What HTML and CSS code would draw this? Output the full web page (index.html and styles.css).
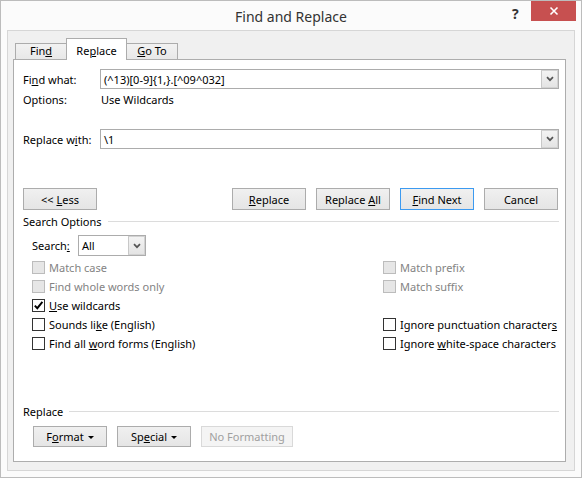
FILE: index.html
```html
<!DOCTYPE html>
<html>
<head>
<meta charset="utf-8">
<title>Find and Replace</title>
<link rel="stylesheet" href="styles.css">
</head>
<body>
<div class="window">
  <div class="titlebar">
    <div class="title">Find and Replace</div>
    <div class="help">?</div>
    <div class="close"><svg width="10" height="10" viewBox="0 0 10 10"><path d="M1.5 1.5 L8.5 8.5 M8.5 1.5 L1.5 8.5" stroke="#fff" stroke-width="1.6" fill="none"/></svg></div>
  </div>
  <div class="frame">
    <div class="tabs">
      <div class="tab tab-first"><span>Fin<u>d</u></span></div>
      <div class="tab active"><span>Re<u>p</u>lace</span></div>
      <div class="tab tab-last"><span><u>G</u>o To</span></div>
    </div>
    <div class="panel">
      <div class="field-row find-row">
        <span class="lbl">Fi<u>n</u>d what:</span>
        <div class="combo">
          <span class="combo-text">(^13)[0-9]{1,}.[^09^032]</span>
          <span class="drop"><svg width="8" height="6" viewBox="0 0 8 6"><path d="M1 1.2 L4 4.2 L7 1.2" stroke="#555" stroke-width="1.7" fill="none"/></svg></span>
        </div>
      </div>
      <div class="field-row options-row">
        <span class="lbl">Options:</span>
        <span class="opt-val">Use Wildcards</span>
      </div>
      <div class="field-row replace-row">
        <span class="lbl">Replace w<u>i</u>th:</span>
        <div class="combo">
          <span class="combo-text">\1</span>
          <span class="drop"><svg width="8" height="6" viewBox="0 0 8 6"><path d="M1 1.2 L4 4.2 L7 1.2" stroke="#555" stroke-width="1.7" fill="none"/></svg></span>
        </div>
      </div>
      <div class="btn-row">
        <button class="btn"><span>&lt;&lt; <u>L</u>ess</span></button>
        <div class="spacer"></div>
        <button class="btn"><span><u>R</u>eplace</span></button>
        <button class="btn"><span>Replace <u>A</u>ll</span></button>
        <button class="btn default"><span><u>F</u>ind Next</span></button>
        <button class="btn"><span>Cancel</span></button>
      </div>
      <div class="section"><span>Search Options</span><span class="rule"></span></div>
      <div class="search-row">
        <span class="search-lbl">Search<u>:</u></span>
        <div class="select">
          <span class="select-text">All</span>
          <span class="drop"><svg width="8" height="6" viewBox="0 0 8 6"><path d="M1 1.2 L4 4.2 L7 1.2" stroke="#555" stroke-width="1.7" fill="none"/></svg></span>
        </div>
      </div>
      <div class="checks">
        <div class="chk disabled"><span class="box"></span><span>Match case</span></div>
        <div class="chk disabled"><span class="box"></span><span>Match prefix</span></div>
        <div class="chk disabled"><span class="box"></span><span>Find whole words only</span></div>
        <div class="chk disabled"><span class="box"></span><span>Match suffix</span></div>
        <div class="chk"><span class="box"><svg width="11" height="11" viewBox="0 0 11 11"><path d="M1.8 5.6 L4.3 8.2 L9.4 1.8" stroke="#000" stroke-width="1.9" fill="none"/></svg></span><span><u>U</u>se wildcards</span></div>
        <div class="chk empty"></div>
        <div class="chk"><span class="box"></span><span>Sounds li<u>k</u>e (English)</span></div>
        <div class="chk"><span class="box"></span><span>Ignore punctuation character<u>s</u></span></div>
        <div class="chk"><span class="box"></span><span>Find all <u>w</u>ord forms (English)</span></div>
        <div class="chk"><span class="box"></span><span>Ignore <u>w</u>hite-space characters</span></div>
      </div>
      <div class="section replace-sec"><span>Replace</span><span class="rule"></span></div>
      <div class="bottom-btns">
        <button class="btn small"><span>F<u>o</u>rmat</span><span class="caret"></span></button>
        <button class="btn small"><span>Sp<u>e</u>cial</span><span class="caret"></span></button>
        <button class="btn small wide" disabled><span>No Formatting</span></button>
      </div>
    </div>
  </div>
</div>
</body>
</html>
```

FILE: styles.css
```css
* { box-sizing: border-box; }
html, body { margin: 0; padding: 0; background: #fff; }
body {
  font-family: "Noto Sans", "Open Sans", sans-serif;
  font-size: 11px;
  color: #000;
}
u { text-decoration: underline; text-underline-offset: 1px; }

.window {
  width: 582px;
  height: 478px;
  border: 1px solid #bcbcbc;
  background: #fbfbfb;
  display: flex;
  flex-direction: column;
}
.titlebar {
  height: 29px;
  position: relative;
  display: flex;
  align-items: center;
  justify-content: center;
}
.title {
  font-size: 14px;
  color: #333;
  margin-top: 1px;
}
.help {
  position: absolute;
  left: 511px;
  top: 3px;
  font-size: 14px;
  font-weight: bold;
  color: #333;
}
.close {
  position: absolute;
  left: 530px;
  top: 0;
  width: 45px;
  height: 20px;
  background: #c75050;
  display: flex;
  align-items: center;
  justify-content: center;
}

.frame {
  flex: 1;
  margin: 0 6px 6px 6px;
  border: 1px solid #d6d6d6;
  background: #f0f0f0;
  display: flex;
  flex-direction: column;
}
.tabs {
  height: 28px;
  padding-left: 7px;
  display: flex;
  align-items: flex-end;
}
.tab {
  height: 16px;
  border: 1px solid #acacac;
  border-bottom: none;
  background: linear-gradient(#f2f2f2, #e8e8e8);
  display: flex;
  align-items: center;
  justify-content: center;
  padding-bottom: 3px;
}
.tab-first { width: 51px; border-right: none; }
.tab-last { width: 51px; border-left: none; }
.tab.active {
  width: 61px;
  height: 22px;
  background: #fff;
  margin-bottom: -1px;
  position: relative;
  z-index: 1;
  padding-top: 2px;
  padding-bottom: 0;
}

.panel {
  flex: 1;
  margin: 0 8px 8px 5px;
  border: 1px solid #adadad;
  background: #fff;
  padding: 0 6px 0 9px;
}
.field-row {
  display: flex;
  align-items: center;
}
.lbl { width: 77px; flex: none; }
.find-row { margin-top: 9px; height: 20px; }
.options-row { margin-top: 2px; height: 16px; }
.opt-val { padding-left: 1px; }
.replace-row { margin-top: 22px; height: 20px; }
.combo {
  flex: 1;
  height: 20px;
  border: 1px solid #acacac;
  display: flex;
  align-items: stretch;
}
.combo-text { flex: 1; padding-left: 3px; display: flex; align-items: center; }
.drop {
  width: 17px;
  flex: none;
  border: 1px solid #d2d2d2;
  border-left-color: #c8c8c8;
  background: linear-gradient(#f3f3f3, #e4e4e4);
  display: flex;
  align-items: center;
  justify-content: center;
}

.btn-row {
  margin-top: 39px;
  margin-right: 1px;
  display: flex;
  gap: 10px;
}
.spacer { flex: 1; }
.btn {
  width: 74px;
  height: 22px;
  padding: 0;
  font: inherit;
  color: #000;
  border: 1px solid #acacac;
  background: linear-gradient(#f0f0f0, #e5e5e5);
  display: flex;
  align-items: center;
  justify-content: center;
}
.btn.default { border-color: #3c9af0; }

.section {
  margin-top: 3px;
  height: 16px;
  display: flex;
  align-items: center;
  gap: 6px;
}
.rule { flex: 1; height: 1px; background: #dcdcdc; margin-top: 1px; }

.search-row {
  margin-top: 6px;
  margin-left: 9px;
  height: 21px;
  display: flex;
  align-items: center;
}
.search-lbl { width: 46px; }
.select {
  width: 68px;
  height: 21px;
  border: 1px solid #acacac;
  display: flex;
  align-items: stretch;
}
.select-text { flex: 1; padding-left: 3px; display: flex; align-items: center; }

.checks {
  margin-top: 2px;
  margin-left: 9px;
  display: grid;
  grid-template-columns: 351px auto;
  grid-auto-rows: 19px;
}
.chk {
  display: flex;
  align-items: center;
  white-space: nowrap;
}
.box {
  width: 13px;
  height: 13px;
  border: 1px solid #333;
  background: #fff;
  margin-right: 4px;
  display: flex;
  align-items: center;
  justify-content: center;
}
.chk.disabled { color: #838383; }
.chk.disabled .box { border-color: #bcbcbc; background: #e6e6e6; }

.replace-sec { margin-top: 50px; }
.bottom-btns {
  margin-top: 7px;
  margin-left: 10px;
  display: flex;
  gap: 10px;
}
.btn.small { height: 21px; }
.btn.wide { width: 92px; }
.btn[disabled] {
  color: #a0a0a0;
  border-color: #d9d9d9;
  background: #f4f4f4;
}
.caret {
  width: 0;
  height: 0;
  border-left: 3px solid transparent;
  border-right: 3px solid transparent;
  border-top: 3px solid #000;
  margin-left: 4px;
  margin-top: 1px;
}
```
